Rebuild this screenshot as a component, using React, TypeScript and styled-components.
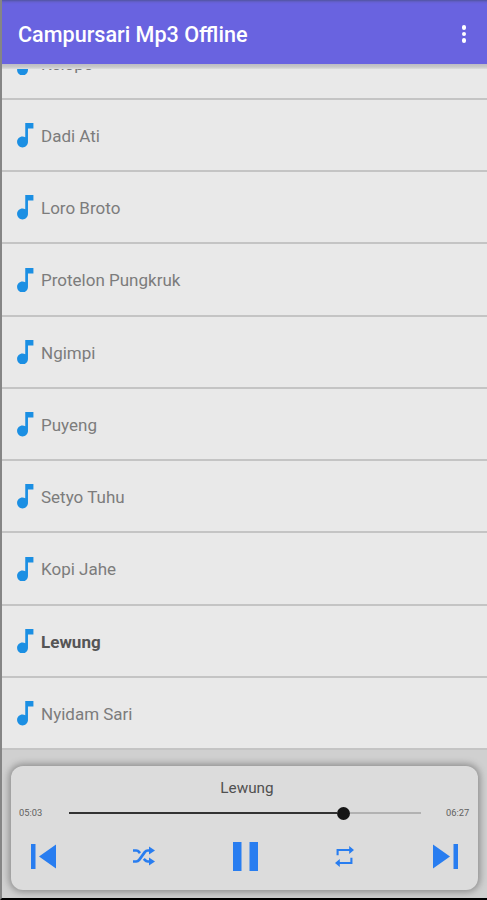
import React from 'react';
import styled, { createGlobalStyle } from 'styled-components';

const GlobalStyle = createGlobalStyle`
  * { box-sizing: border-box; }
  body { margin: 0; background: #e9e9e9; font-family: Roboto, sans-serif; }
`;

const Screen = styled.div`
  width: 487px;
  height: 900px;
  overflow: hidden;
  display: flex;
  flex-direction: column;
  background: #e9e9e9;
  border-left: 2px solid #858585;
  border-bottom: 2px solid #000;
`;

const AppBar = styled.header`
  flex: none;
  height: 64px;
  margin-left: -2px;
  padding: 4px 15px 0 16px;
  display: flex;
  align-items: center;
  justify-content: space-between;
  background: linear-gradient(#5054a0 0, #6560d0 2px, #6963e0 4px);
  border-left: 2px solid #6560bd;
`;

const Title = styled.h1`
  margin: 0;
  padding-top: 1px;
  color: #fff;
  font-size: 21.6px;
  font-weight: 500;
  line-height: 28px;
  white-space: nowrap;
`;

const MenuButton = styled.button`
  display: flex;
  flex-direction: column;
  align-items: center;
  gap: 2.2px;
  width: 16px;
  padding: 0;
  border: 0;
  background: none;
`;

const Dot = styled.span`
  width: 4.4px;
  height: 4.4px;
  border-radius: 50%;
  background: #fff;
`;

const BarShadow = styled.div`
  flex: none;
  height: 5px;
  background: linear-gradient(#bcbcc4, #c9caca 60%, #dcdfdf);
`;

const SongList = styled.ul`
  flex: none;
  height: 681px;
  margin: 0;
  padding: 0;
  overflow: hidden;
  display: flex;
  flex-direction: column;
  justify-content: flex-end;
  list-style: none;
`;

const SongRow = styled.li`
  flex: none;
  height: 72.25px;
  display: flex;
  align-items: center;
  gap: 7.5px;
  padding: 1px 0 0 15px;
  border-bottom: 2px solid #c4c4c4;
`;

const SongName = styled.span<{ $active?: boolean }>`
  color: ${p => (p.$active ? '#555' : '#7c7c7c')};
  font-size: 17px;
  font-weight: ${p => (p.$active ? 700 : 400)};
  line-height: 24px;
  padding-top: 1px;
`;

const PlayerArea = styled.footer`
  flex: 1;
  padding: 16px 9px 8px;
  display: flex;
  background: #d0d0d0;
`;

const PlayerCard = styled.section`
  flex: 1;
  display: flex;
  flex-direction: column;
  border-radius: 12px;
  background: #dcdcdc;
  box-shadow: 0 0 7px 2px #8c8c8c;
`;

const NowPlaying = styled.div`
  height: 43px;
  padding: 13px 0 0 5px;
  text-align: center;
  color: #505050;
  font-size: 15.3px;
  line-height: 18px;
`;

const SeekRow = styled.div`
  height: 8px;
  display: flex;
  align-items: center;
  justify-content: space-between;
  padding: 0 5px 0 8px;
`;

const Time = styled.span`
  width: 27px;
  color: #606060;
  font-size: 9.3px;
  line-height: 10px;
`;

const Track = styled.div`
  width: 352px;
  margin-right: 3px;
  display: flex;
  align-items: center;
`;

const Elapsed = styled.div`
  width: 268px;
  height: 2.4px;
  background: #333;
`;

const Thumb = styled.div`
  width: 13px;
  height: 13px;
  border-radius: 50%;
  background: #151515;
`;

const Remaining = styled.div`
  flex: 1;
  height: 2px;
  background: #b2b2b2;
`;

const Controls = styled.div`
  height: 73px;
  padding: 5px 20px 0 20px;
  display: flex;
  align-items: center;
  justify-content: space-between;
`;

const Control = styled.button<{ $shift?: number }>`
  display: flex;
  padding: 0;
  margin: 0 ${p => p.$shift ?? 0}px 0 ${p => -(p.$shift ?? 0)}px;
  border: 0;
  background: none;
  color: #287df0;
`;

const NoteIcon = () => (
  <svg width="16.5" height="24.5" viewBox="6 3 12 18" fill="#1b8fe3">
    <path d="M12 3v10.55c-.59-.34-1.27-.55-2-.55-2.21 0-4 1.79-4 4s1.79 4 4 4 4-1.79 4-4V7h4V3z" />
  </svg>
);

const PreviousIcon = () => (
  <svg width="25" height="25" viewBox="0 0 25 25" fill="currentColor">
    <path d="M0 0h4.500v25H0zM25 .5v24L8 12.500z" />
  </svg>
);

const NextIcon = () => (
  <svg width="25" height="25" viewBox="0 0 25 25" fill="currentColor">
    <path d="M20.500 0H25v25h-4.500zM0 .5v24l17-12z" />
  </svg>
);

const PauseIcon = () => (
  <svg width="25" height="29" viewBox="0 0 25 29" fill="currentColor">
    <path d="M0 0h8.500v29H0zM16.500 0H25v29h-8.500z" />
  </svg>
);

const ShuffleIcon = () => (
  <svg width="22" height="20" viewBox="0 0 22 20" fill="none" stroke="currentColor" strokeWidth="2.7">
    <path d="M0 4.500h3.200q1.800 0 3 1.600l.8 1M0 15.500h3.200q1.800 0 3-1.600l5.600-7.800q1.200-1.600 3-1.600H17M10.800 12.800l1 1.100q1.200 1.600 3 1.600H17" />
    <path d="M16 .5l6 4-6 4zM16 11.500l6 4-6 4z" fill="currentColor" stroke="none" />
  </svg>
);

const RepeatIcon = () => (
  <svg width="19" height="21" viewBox="0 0 19 21" fill="none" stroke="currentColor" strokeWidth="2.1">
    <path d="M2.600 9.200V4H15M16.400 11.800V17H4" />
    <path d="M14.200 0l4.800 4-4.800 4zM4.800 13L0 17l4.800 4z" fill="currentColor" stroke="none" />
  </svg>
);

const songs = ['Kelopo', 'Dadi Ati', 'Loro Broto', 'Protelon Pungkruk', 'Ngimpi', 'Puyeng', 'Setyo Tuhu', 'Kopi Jahe', 'Lewung', 'Nyidam Sari'];
const current = 'Lewung';

export default function App() {
  return (
    <>
      <GlobalStyle />
      <Screen>
        <AppBar>
          <Title>Campursari Mp3 Offline</Title>
          <MenuButton aria-label="More options"><Dot /><Dot /><Dot /></MenuButton>
        </AppBar>
        <BarShadow />
        <SongList>
          {songs.map(song => (
            <SongRow key={song}>
              <NoteIcon />
              <SongName $active={song === current}>{song}</SongName>
            </SongRow>
          ))}
        </SongList>
        <PlayerArea>
          <PlayerCard>
            <NowPlaying>{current}</NowPlaying>
            <SeekRow>
              <Time>05:03</Time>
              <Track><Elapsed /><Thumb /><Remaining /></Track>
              <Time>06:27</Time>
            </SeekRow>
            <Controls>
              <Control aria-label="Previous"><PreviousIcon /></Control>
              <Control aria-label="Shuffle" $shift={1}><ShuffleIcon /></Control>
              <Control aria-label="Pause" $shift={1}><PauseIcon /></Control>
              <Control aria-label="Repeat" $shift={1}><RepeatIcon /></Control>
              <Control aria-label="Next"><NextIcon /></Control>
            </Controls>
          </PlayerCard>
        </PlayerArea>
      </Screen>
    </>
  );
}
